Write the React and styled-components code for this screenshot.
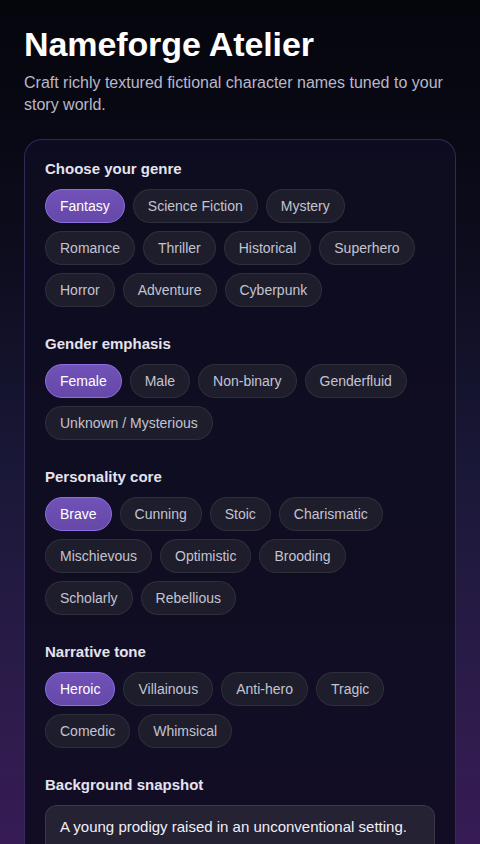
import React, { useState } from 'react';
import styled, { createGlobalStyle } from 'styled-components';

const GlobalStyle = createGlobalStyle`
  * { box-sizing: border-box; }
  html, body {
    margin: 0;
    padding: 0;
    min-height: 100%;
    background: #07070f;
  }
  body {
    font-family: "Liberation Sans", Arial, Helvetica, sans-serif;
    color: #f2f2f7;
  }
`;

const sections = [
  {
    key: 'genre',
    title: 'Choose your genre',
    options: ['Fantasy', 'Science Fiction', 'Mystery', 'Romance', 'Thriller', 'Historical', 'Superhero', 'Horror', 'Adventure', 'Cyberpunk'],
  },
  {
    key: 'gender',
    title: 'Gender emphasis',
    options: ['Female', 'Male', 'Non-binary', 'Genderfluid', 'Unknown / Mysterious'],
  },
  {
    key: 'personality',
    title: 'Personality core',
    options: ['Brave', 'Cunning', 'Stoic', 'Charismatic', 'Mischievous', 'Optimistic', 'Brooding', 'Scholarly', 'Rebellious'],
  },
  {
    key: 'tone',
    title: 'Narrative tone',
    options: ['Heroic', 'Villainous', 'Anti-hero', 'Tragic', 'Comedic', 'Whimsical'],
  },
];

function App() {
  const [picked, setPicked] = useState({
    genre: 'Fantasy',
    gender: 'Female',
    personality: 'Brave',
    tone: 'Heroic',
  });
  const [background, setBackground] = useState('A young prodigy raised in an unconventional setting.');

  return (
    <Page>
      <GlobalStyle />
      <Header>
        <Title>Nameforge Atelier</Title>
        <Subtitle>Craft richly textured fictional character names tuned to your story world.</Subtitle>
      </Header>
      <Card>
        {sections.map((section) => (
          <Section key={section.key}>
            <SectionTitle>{section.title}</SectionTitle>
            <ChipRow>
              {section.options.map((opt) => (
                <Chip
                  key={opt}
                  $active={picked[section.key] === opt}
                  onClick={() => setPicked({ ...picked, [section.key]: opt })}
                >
                  {opt}
                </Chip>
              ))}
            </ChipRow>
          </Section>
        ))}
        <Section>
          <SectionTitle>Background snapshot</SectionTitle>
          <TextArea
            rows={3}
            value={background}
            onChange={(e) => setBackground(e.target.value)}
          />
        </Section>
      </Card>
    </Page>
  );
}

const Page = styled.div`
  min-height: 100vh;
  padding: 24px 24px 40px;
  background: linear-gradient(180deg, #05050c 0%, #0c0c1c 25%, #1a1838 50%, #2e1c4c 75%, #3e1a5c 100%);
`;

const Header = styled.header`
  margin-bottom: 23px;
`;

const Title = styled.h1`
  margin: 0 0 8px;
  font-size: 34px;
  line-height: 40px;
  font-weight: 700;
  color: #ffffff;
  letter-spacing: -0.1px;
`;

const Subtitle = styled.p`
  margin: 0;
  font-size: 16px;
  line-height: 22px;
  color: #b9b8c9;
`;

const Card = styled.main`
  display: flex;
  flex-direction: column;
  gap: 27px;
  padding: 19px 20px 24px;
  border-radius: 18px;
  border: 1px solid rgba(120, 105, 210, 0.32);
  background: rgba(14, 12, 32, 0.9);
`;

const Section = styled.section`
  display: flex;
  flex-direction: column;
  gap: 11px;
`;

const SectionTitle = styled.h2`
  margin: 0;
  font-size: 15px;
  line-height: 19px;
  font-weight: 700;
  color: #e4e3ee;
`;

const ChipRow = styled.div`
  display: flex;
  flex-wrap: wrap;
  gap: 8px;
`;

const Chip = styled.button`
  height: 34px;
  padding: 0 14px;
  border-radius: 17px;
  font-family: inherit;
  font-size: 14px;
  cursor: pointer;
  border: 1px solid ${(p) => (p.$active ? '#8c6fe0' : 'rgba(255, 255, 255, 0.08)')};
  background: ${(p) => (p.$active ? 'linear-gradient(180deg, #7152b8, #6548a8)' : '#1e1d2b')};
  color: ${(p) => (p.$active ? '#ffffff' : '#c4c3d2')};
`;

const TextArea = styled.textarea`
  width: 100%;
  resize: none;
  padding: 11px 14px;
  border-radius: 12px;
  border: 1px solid rgba(255, 255, 255, 0.1);
  background: #252234;
  color: #f0eff7;
  font-family: inherit;
  font-size: 15px;
  line-height: 20px;
  outline: none;
`;

export default App;
